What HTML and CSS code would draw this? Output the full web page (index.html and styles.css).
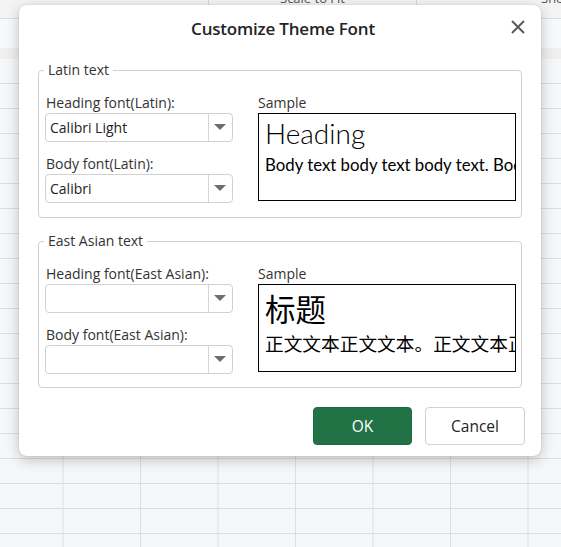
FILE: index.html
```html
<!DOCTYPE html>
<html lang="en">
<head>
<meta charset="utf-8">
<title>Customize Theme Font</title>
<link rel="stylesheet" href="styles.css">
</head>
<body>
<div class="sheet">
  <div class="ribbon">
    <div class="rcell"></div>
    <div class="rcell"><span class="rtext">Scale to Fit</span></div>
    <div class="rcell rlast"><span class="rtext">Sheet Options</span></div>
  </div>
  <div class="formula"></div>
  <div class="band"></div>
  <div class="grid"></div>
</div>

<div class="dialog" role="dialog" aria-label="Customize Theme Font">
  <div class="dlg-head">
    <h1 class="dlg-title">Customize Theme Font</h1>
    <button class="close" aria-label="Close">
      <svg width="14" height="14" viewBox="0 0 14 14"><path d="M1 1 L13 13 M13 1 L1 13" stroke="#5a5a5a" stroke-width="2" fill="none"/></svg>
    </button>
  </div>

  <fieldset class="group">
    <legend class="legend">Latin text</legend>
    <div class="group-body">
      <div class="fields">
        <label class="lbl">Heading font(Latin):</label>
        <div class="select"><span class="sel-val">Calibri Light</span><span class="sel-arrow"></span></div>
        <label class="lbl lbl2">Body font(Latin):</label>
        <div class="select"><span class="sel-val">Calibri</span><span class="sel-arrow"></span></div>
      </div>
      <div class="sample-col">
        <div class="lbl">Sample</div>
        <div class="sample">
          <div class="s-head">Heading</div>
          <div class="s-body">Body text body text body text. Body text body text.</div>
        </div>
      </div>
    </div>
  </fieldset>

  <fieldset class="group group2">
    <legend class="legend">East Asian text</legend>
    <div class="group-body">
      <div class="fields">
        <label class="lbl">Heading font(East Asian):</label>
        <div class="select"><span class="sel-val"></span><span class="sel-arrow"></span></div>
        <label class="lbl lbl2">Body font(East Asian):</label>
        <div class="select"><span class="sel-val"></span><span class="sel-arrow"></span></div>
      </div>
      <div class="sample-col">
        <div class="lbl">Sample</div>
        <div class="sample">
          <div class="s-head cjk">标题</div>
          <div class="s-body cjk">正文文本正文文本。正文文本正文文本。</div>
        </div>
      </div>
    </div>
  </fieldset>

  <div class="actions">
    <button class="btn btn-ok">OK</button>
    <button class="btn btn-cancel">Cancel</button>
  </div>
</div>
</body>
</html>
```

FILE: styles.css
```css
* { box-sizing: border-box; }
html, body { margin: 0; padding: 0; }
body {
  width: 561px;
  height: 547px;
  overflow: hidden;
  position: relative;
  font-family: "Open Sans", "Noto Sans", "Liberation Sans", sans-serif;
  background: #f5f7f9;
}

/* background spreadsheet */
.sheet { display: flex; flex-direction: column; height: 547px; }
.ribbon {
  height: 19px;
  display: flex;
  background: #f3f3f3;
  border-bottom: 1px solid #dcdcdc;
  overflow: hidden;
}
.rcell {
  width: 209px;
  flex: none;
  border-right: 1px solid #d8d8d8;
  text-align: center;
  overflow: hidden;
  white-space: nowrap;
}
.rcell + .rcell { width: 208px; }
.rcell.rlast { flex: 1; width: auto; border-right: 0; text-align: left; padding-left: 124px; }
.rtext {
  display: block;
  margin-top: -10px;
  font-size: 13px;
  line-height: 16px;
  color: #555;
}
.formula { height: 29px; background: #f7f8f9; }
.band { height: 11px; background: #efefef; }
.grid {
  flex: 1;
  background-color: #f5f7f9;
  background-image:
    linear-gradient(to right, #dedede 1px, transparent 1px),
    linear-gradient(to bottom, #dedede 1px, transparent 1px);
  background-size: 77.5px 25px;
  background-position: 62.5px 24px;
}

/* dialog */
.dialog {
  position: absolute;
  left: 19px;
  top: 5px;
  width: 522px;
  height: 451px;
  background: #fff;
  border-radius: 8px;
  box-shadow: 0 4px 14px rgba(0,0,0,0.22), 0 0 2px rgba(0,0,0,0.12);
  padding: 0 16px 0 19px;
  display: flex;
  flex-direction: column;
}
.dlg-head {
  height: 47px;
  display: flex;
  align-items: center;
  justify-content: center;
  position: relative;
  margin-right: -3px;
}
.dlg-title {
  margin: 0;
  font-size: 17px;
  font-weight: 600;
  color: #242424;
  letter-spacing: -0.2px;
  padding-bottom: 1px;
}
.close {
  position: absolute;
  right: 2px;
  top: 14px;
  width: 16px;
  height: 16px;
  padding: 0;
  border: 0;
  background: none;
  display: flex;
  align-items: center;
  justify-content: center;
}

.group {
  margin: 9px 3px 0 0;
  padding: 0 5px 0 6px;
  border: 1px solid #cfcfcf;
  border-radius: 4px;
  min-width: 0;
  height: 157px;
}
.group2 { margin-top: 14px; height: 156px; }
.legend {
  margin-left: -1px;
  padding: 0 4px;
  font-size: 14px;
  line-height: 18px;
  color: #333;
}
.group-body {
  display: flex;
  gap: 25px;
  padding-top: 15px;
}
.fields { width: 188px; display: flex; flex-direction: column; }
.lbl {
  font-size: 14px;
  line-height: 18px;
  color: #333;
  padding-left: 1px;
  display: block;
}
.lbl2 { margin-top: 13px; }
.select {
  margin-top: 1px;
  height: 29px;
  border: 1px solid #d1d1d1;
  border-radius: 4px;
  display: flex;
  align-items: center;
}
.sel-val {
  flex: 1;
  padding-left: 4px;
  font-size: 14px;
  color: #222;
}
.sel-arrow {
  width: 24px;
  align-self: stretch;
  border-left: 1px solid #d6d6d6;
  position: relative;
}
.sel-arrow::after {
  content: "";
  position: absolute;
  left: 5px;
  top: 10px;
  border-left: 6.5px solid transparent;
  border-right: 6.5px solid transparent;
  border-top: 6px solid #6e6e6e;
}

.sample-col { width: 258px; display: flex; flex-direction: column; }
.sample-col .lbl { padding-left: 0; }
.sample {
  margin-top: 1px;
  height: 88px;
  border: 1px solid #000;
  overflow: hidden;
  white-space: nowrap;
  padding-left: 6px;
  font-family: "Lato", "Open Sans", sans-serif;
  color: #000;
}
.s-head {
  font-size: 28px;
  font-weight: 300;
  line-height: 32px;
  margin-top: 3px;
}
.s-body {
  font-size: 16.8px;
  line-height: 20px;
  margin-top: 6px;
}
.cjk { font-family: "Noto Sans CJK SC", sans-serif; }
.s-head.cjk { font-size: 30.5px; font-weight: 400; line-height: 38px; margin-top: 4px; }
.s-body.cjk { font-size: 18.7px; line-height: 22px; margin-top: 5px; }

.actions {
  margin-top: auto;
  padding-bottom: 11px;
  display: flex;
  justify-content: flex-end;
  gap: 13px;
}
.btn {
  width: 99px;
  height: 38px;
  border-radius: 4px;
  font-family: "Open Sans", "Noto Sans", sans-serif;
  font-size: 15.5px;
  cursor: pointer;
}
.btn-ok { background: #217346; color: #fff; border: 1px solid #1d6b40; }
.btn-cancel { background: #fff; color: #242424; border: 1px solid #d1d1d1; width: 100px; }
```
